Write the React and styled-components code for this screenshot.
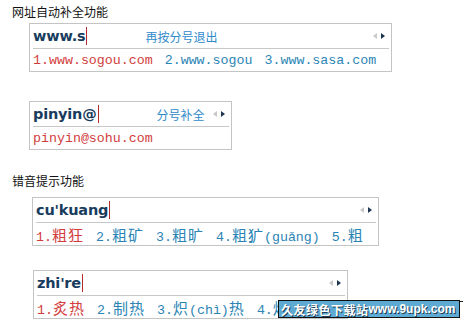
import React from 'react'
import styled, { createGlobalStyle } from 'styled-components'

const Global = createGlobalStyle`
	html, body {
		margin: 0;
		background: #fff;
	}
	body {
		font-family: "Noto Sans CJK SC", sans-serif;
	}
`

const Page = styled.div`
	position: relative;
	width: 463px;
	height: 321px;
	overflow: hidden;
	padding: 5px 0 0 12px;
	box-sizing: border-box;
`

const Heading = styled.div`
	font-size: 12px;
	line-height: 14px;
	color: #111;
	margin-top: ${p => p.top || 0}px;
`

const Box = styled.div`
	width: ${p => p.w}px;
	margin-left: ${p => p.left}px;
	margin-top: ${p => p.top}px;
	border: 1px solid #c4c4c4;
	box-sizing: border-box;
	background: #fff;
`

const InputRow = styled.div`
	display: flex;
	align-items: center;
	height: 24px;
	padding: 0 6px 0 3px;
`

const Typed = styled.span`
	font-family: "DejaVu Sans", sans-serif;
	font-weight: bold;
	font-size: 14.5px;
	color: #183c5e;
	letter-spacing: -0.2px;
`

const Caret = styled.span`
	display: inline-block;
	width: 1px;
	height: 18px;
	margin-left: 1px;
	background: #b52a2a;
`

const Hint = styled.span`
	margin-left: 58px;
	font-size: 12px;
	color: #2f8acb;
`

const Arrows = styled.span`
	margin-left: auto;
	display: flex;
	gap: 4px;
	align-items: center;
`

const Tri = styled.span`
	width: 0;
	height: 0;
	border-top: 3.5px solid transparent;
	border-bottom: 3.5px solid transparent;
	${p => p.dir === 'left'
		? `border-right: 4px solid #c8c8c8;`
		: `border-left: 4px solid #1c3550;`}
`

const Divider = styled.div`
	margin: 0 2px 0 3px;
	border-top: 1px solid #c8c8c8;
`

const CandRow = styled.div`
	display: flex;
	align-items: center;
	gap: 12px;
	height: 22px;
	padding-left: 3px;
	white-space: nowrap;
	overflow: hidden;
	font-family: "Liberation Mono", "Noto Sans CJK SC", monospace;
	font-size: 13.3px;
`

const Cand = styled.span`
	color: ${p => (p.first ? '#d23c3c' : '#2b84b4')};
`

const Han = styled.span`
	font-family: "Noto Sans CJK SC", sans-serif;
	font-size: 15px;
	letter-spacing: 1px;
`

const Watermark = styled.div`
	position: absolute;
	left: 278px;
	top: 300px;
	width: 182px;
	height: 18px;
	box-sizing: border-box;
	border: 1px solid #111;
	background: #5eaad2;
	display: flex;
	align-items: center;
	padding-left: 2px;
	color: #fff;
	font-weight: bold;
	white-space: nowrap;
	text-shadow: 1px 1px 0 #1d3d55;
`

const MarkHan = styled.span`
	font-family: "Noto Sans CJK SC", sans-serif;
	font-size: 12px;
	letter-spacing: 0.5px;
`

const MarkUrl = styled.span`
	font-family: "Liberation Sans", sans-serif;
	font-size: 12px;
`

const GridLine = styled.div`
	position: absolute;
	left: 278px;
	right: 0;
	top: 301px;
	border-top: 1px solid #222;
`

const Composer = ({ w, left, top, typed, hint, children }) => (
	<Box w={w} left={left} top={top}>
		<InputRow>
			<Typed>{typed}</Typed>
			<Caret />
			{hint && <Hint>{hint}</Hint>}
			<Arrows>
				<Tri dir="left" />
				<Tri dir="right" />
			</Arrows>
		</InputRow>
		<Divider />
		<CandRow>{children}</CandRow>
	</Box>
)

const App = () => (
	<Page>
		<Global />
		<Heading>网址自动补全功能</Heading>
		<Composer w={363} left={17} top={4} typed="www.s" hint="再按分号退出">
			<Cand first>1.www.sogou.com</Cand>
			<Cand>2.www.sogou</Cand>
			<Cand>3.www.sasa.com</Cand>
		</Composer>
		<Composer w={203} left={17} top={29} typed="pinyin@" hint="分号补全">
			<Cand first>pinyin@sohu.com</Cand>
		</Composer>
		<Heading top={24}>错音提示功能</Heading>
		<Composer w={347} left={20} top={9} typed="cu'kuang">
			<Cand first>1.<Han>粗狂</Han></Cand>
			<Cand>2.<Han>粗矿</Han></Cand>
			<Cand>3.<Han>粗旷</Han></Cand>
			<Cand>4.<Han>粗犷</Han>(guǎng)</Cand>
			<Cand>5.<Han>粗</Han></Cand>
		</Composer>
		<Composer w={315} left={21} top={24} typed="zhi're">
			<Cand first>1.<Han>炙热</Han></Cand>
			<Cand>2.<Han>制热</Han></Cand>
			<Cand>3.<Han>炽</Han>(chì)<Han>热</Han></Cand>
			<Cand>4.<Han>灼热</Han></Cand>
		</Composer>
		<GridLine />
		<Watermark>
			<MarkHan>久友绿色下载站</MarkHan>
			<MarkUrl>www.9upk.com</MarkUrl>
		</Watermark>
	</Page>
)

export default App
